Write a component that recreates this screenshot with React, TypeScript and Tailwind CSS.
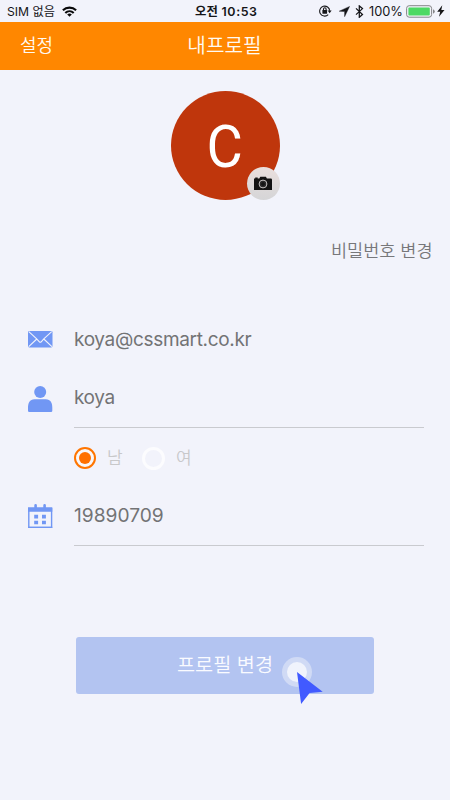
import React from 'react';

const korean = "font-['Inter','Noto_Sans_CJK_KR',sans-serif]";

function Wifi() {
  return (
    <svg width="15" height="11" viewBox="0 0 15 11" fill="none" stroke="#080809" strokeWidth="2.1">
      <path d="M.9 4.3C4.6.7 10.4.7 14.1 4.3M3.3 6.9c2.4-2.3 6-2.3 8.4 0" />
      <path d="M7.5 10.8 5.2 8.5c1.3-1.2 3.3-1.2 4.6 0Z" fill="#080809" stroke="none" />
    </svg>
  );
}

function StatusBar() {
  return (
    <header className="relative flex h-[22px] shrink-0 items-center text-[#151518]">
      <div className="flex items-center pl-[7px]">
        <span className="w-[55px] whitespace-nowrap pt-px text-[12.2px] leading-[22px]">SIM 없음</span>
        <Wifi />
      </div>
      <div className="absolute left-[195px] top-0 whitespace-nowrap text-[12.4px] font-semibold leading-[23px] tracking-[0.6px]"><span className="tracking-normal">오전</span> 10:53</div>
      <div className="ml-auto flex items-center pr-[5px]">
        <svg width="13" height="12" viewBox="0 0 13 12" fill="none" stroke="#151518" strokeWidth="1.1">
          <path d="M9.2 9.7A5 5 0 1 1 10.7 5.8" />
          <path d="m8.7 5.6 3.9-.1-2 2.7Z" fill="#151518" stroke="none" />
          <rect x="3.4" y="5" width="4.7" height="3.7" rx=".4" fill="#151518" stroke="none" />
          <path d="M4.5 5V4a1.3 1.3 0 0 1 2.6 0v1" />
        </svg>
        <svg className="ml-[7px]" width="11" height="11" viewBox="0 0 11 11" fill="#151518"><path d="M.2 5.2 10.6.4 5.6 10.7V5.6Z" stroke="#151518" strokeWidth=".4" /></svg>
        <svg className="ml-[5px]" width="9" height="13" viewBox="0 0 9 13" fill="none" stroke="#151518" strokeWidth="1.25"><path d="m1 3.4 6.5 6.1-3.2 2.8V.9l3.2 2.7L1 9.6" /></svg>
        <span className="ml-[5px] w-[37px] whitespace-nowrap text-[12.8px] leading-[23px]">100%</span>
        <svg width="29" height="13" viewBox="0 0 29 13">
          <rect x=".6" y=".7" width="25" height="11.5" rx="2.6" fill="#f2f3fa" stroke="#858588" />
          <rect x="2.4" y="2.4" width="21.4" height="8.1" rx="1" fill="#4cd964" />
          <path d="M27 4.3q1.8.7 1.8 2.2T27 8.7Z" fill="#858588" />
        </svg>
        <svg className="ml-[2px]" width="8" height="12" viewBox="0 0 8 12" fill="#151518"><path d="M5.3.3.2 6.8h3L2 11.7l5.5-6.8H4.3Z" /></svg>
      </div>
    </header>
  );
}

function MailIcon() {
  return (
    <svg width="25" height="17" viewBox="0 0 25 17">
      <rect width="24.5" height="16.4" rx="1.3" fill="#7197f4" />
      <path d="m.8.7 7.9 7.1 2.9 3.2q.7.6 1.4 0l2.8-3.2L23.7.7M.7 15.7l8.1-7.7m7 0 8.1 7.7" fill="none" stroke="#f2f3fb" strokeWidth="1.1" />
    </svg>
  );
}

function PersonIcon() {
  return (
    <svg width="25" height="27" viewBox="0 0 25 27" fill="#7197f4">
      <circle cx="12.2" cy="6" r="6" />
      <path d="M6.5 13.2h11.3c4.9 0 6.5 3.6 6.5 8.6v3q0 1.2-1.2 1.2H1.2Q0 26 0 24.800V21.800C0 16.800 1.600 13.200 6.500 13.200Z" />
    </svg>
  );
}

function CalendarIcon() {
  return (
    <svg width="25" height="25" viewBox="0 0 25 25">
      <path d="M.8 4v19.4h22.8V4" fill="none" stroke="#7197f4" strokeWidth="1.4" />
      <path d="M0 3.3h6.3V1.2q0-1.2 1.3-1.2T8.9 1.2v2.1h6.4V1.2q0-1.2 1.3-1.2t1.3 1.2v2.1h6.4v4.4H0Z" fill="#7197f4" />
      <path d="M.1 22.7h24.2v1.4H.1ZM6.2 10.8h3.9v3.7H6.2Zm7.8 0h3.9v3.7H14Zm-7.8 5.9h3.9v3.5H6.2Zm7.8 0h3.9v3.5H14Z" fill="#7197f4" />
    </svg>
  );
}

function Avatar() {
  return (
    <div className="relative ml-[170.5px] mt-[21.5px] h-[109px] w-[109px] shrink-0 rounded-full bg-[#bf360c]">
      <div className="flex h-full w-full scale-x-[0.93] items-center justify-center pr-[2px] pt-[2px] font-['Roboto',sans-serif] text-[60px] leading-none text-[#fff]">C</div>
      <div className="absolute left-[76px] top-[76px] flex h-[33px] w-[33px] items-center justify-center rounded-full bg-linear-to-b from-[#eadfdd] to-[#d5d5d7]">
        <svg width="18" height="15" viewBox="0 0 18 15">
          <path d="M0 2.6h1.2V1.5h2.5v1.1h1.6L6.3.7h5.6l1 1.9h3.9q1.2 0 1.2 1.2V14H0Z" fill="#141313" />
          <circle cx="9" cy="8" r="3.9" fill="none" stroke="#ddd8d7" strokeWidth=".9" />
          <circle cx="9" cy="8" r="2.5" fill="none" stroke="#4a4848" strokeWidth=".5" />
        </svg>
      </div>
    </div>
  );
}

function ClickCursor() {
  return (
    <svg className="absolute left-[205px] top-[19px]" width="44" height="50" viewBox="0 0 44 50">
      <circle cx="16" cy="16" r="15" fill="#d0daf5" />
      <circle cx="16" cy="16" r="10" fill="#f0f3fc" />
      <path d="m16 16 25.7 19.7-13.1 1.4L20.1 48Z" fill="#415aff" />
    </svg>
  );
}

export default function App() {
  return (
    <main className={`${korean} flex h-[800px] w-[450px] flex-col overflow-hidden bg-[#f2f3fb]`}>
      <StatusBar />
      <nav className="grid h-[47.5px] shrink-0 grid-cols-3 items-center bg-[#ff8700] text-[#fffaf3]">
        <button className="pl-5 pt-px text-left text-[18px] font-[350] leading-6">설정</button>
        <h1 className="pr-px pt-px text-center text-[20.2px] font-[350] leading-6">내프로필</h1>
      </nav>
      <Avatar />
      <button className="mt-[39px] h-6 shrink-0 pr-[17.500px] text-right text-[17.5px] font-[350] leading-6 text-[#77777a]">비밀번호 변경</button>
      <section className="mt-[59px] flex flex-col pl-[28px] text-[#737375]">
        <div className="flex h-[32px] items-center">
          <div className="w-[46px] pt-[2px]"><MailIcon /></div>
          <span className="pt-[4px] text-[19px] leading-6 tracking-[-0.33px]">koya@cssmart.co.kr</span>
        </div>
        <div className="mt-[17px] flex h-[57px] items-start">
          <div className="w-[46px] pt-[15px]"><PersonIcon /></div>
          <div className="h-[57px] w-[350px] border-b border-[#c9cacf] pt-[15px] text-[19px] leading-6 tracking-[-0.4px]">koya</div>
        </div>
        <div className="ml-[46px] mt-[18px] flex h-[24px] items-center text-[17px] font-[350] text-[#c8c8ca]">
          <span className="flex h-[22px] w-[22px] items-center justify-center rounded-full border-[2.5px] border-[#ff7500] bg-[#f8f7fa]"><i className="h-[12px] w-[12px] rounded-full bg-[#ff7000]" /></span>
          <span className="ml-[11px] w-[35px] leading-6">남</span>
          <span className="h-[23px] w-[23px] rounded-full border-[3px] border-[#fcfcfe]" />
          <span className="ml-[11px] leading-6">여</span>
        </div>
        <div className="mt-[19px] flex h-[57px] items-start">
          <div className="w-[46px] pt-[15px]"><CalendarIcon /></div>
          <div className="h-[57px] w-[350px] border-b border-[#c9cacf] pt-[14px] text-[19.2px] leading-6">19890709</div>
        </div>
      </section>
      <button className="relative ml-[76px] mt-[91px] h-[56.5px] w-[298px] shrink-0 rounded-[3px] bg-[#b3c4f1] text-[19.7px] font-[350] leading-6 text-[#fafbff]">
        프로필 변경
        <ClickCursor />
      </button>
    </main>
  );
}
